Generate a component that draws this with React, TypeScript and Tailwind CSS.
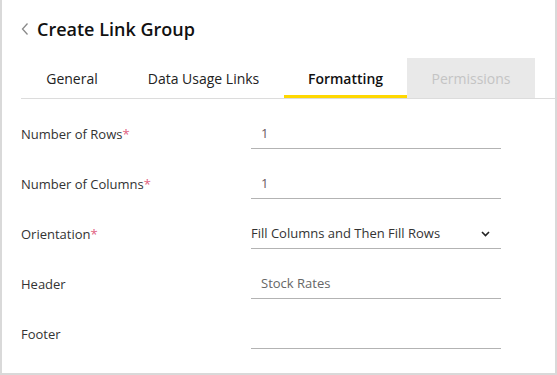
const tabs = [
  { label: 'General', state: 'normal', w: 'w-[102px]' },
  { label: 'Data Usage Links', state: 'normal', w: 'w-[161px]' },
  { label: 'Formatting', state: 'active', w: 'w-[123px]' },
  { label: 'Permissions', state: 'disabled', w: 'w-[128px]' },
]

function Field({ label, required, children }: { label: string; required?: boolean; children: React.ReactNode }) {
  return (
    <div className="flex h-[50px] items-end">
      <div className="flex h-[31px] w-[230px] items-center pt-[2px] text-[13px] text-[#333]">
        {label}
        {required && <span className="text-[#e0607e]">*</span>}
      </div>
      <div className="flex h-[31px] w-[250px] items-center border-b border-[#b3b3b3] pt-[2px] text-[13px]">{children}</div>
    </div>
  )
}

export default function App() {
  return (
    <div
      className="box-border h-[375px] w-[557px] border-x-2 border-b-2 border-[#d9d9d9] bg-white"
      style={{ fontFamily: '"Open Sans", "Liberation Sans", sans-serif' }}
    >
      <div className="flex h-[48px] items-center pl-[19px] pt-[10px]">
        <svg width="8" height="14" viewBox="0 0 8 14" className="mr-[8px]">
          <path d="M6.5 1.5 1.5 7l5 5.5" fill="none" stroke="#8a8a8a" strokeWidth="1.3" />
        </svg>
        <h1 className="text-[18px] font-semibold text-[#111]">Create Link Group</h1>
      </div>
      <div className="ml-[19px] mt-[10px] flex border-b border-[#dcdcdc]">
        {tabs.map((t) => (
          <div
            key={t.label}
            className={
              t.state === 'active'
                ? `flex h-[40px] ${t.w} items-center justify-center border-b-[3px] border-[#ffd800] pt-[3px] text-[14px] font-semibold text-[#111]`
                : t.state === 'disabled'
                  ? `flex h-[40px] ${t.w} items-center justify-center bg-[#e9e9e9] text-[14px] text-[#c4c4c4]`
                  : `flex h-[40px] ${t.w} items-center justify-center text-[14px] text-[#222]`
            }
          >
            {t.label}
          </div>
        ))}
      </div>
      <div className="pl-[19px]">
        <Field label="Number of Rows" required>
          <span className="pl-[10px] text-[#6b5a5f]">1</span>
        </Field>
        <Field label="Number of Columns" required>
          <span className="pl-[10px] text-[#6b5a5f]">1</span>
        </Field>
        <Field label="Orientation" required>
          <div className="flex w-full items-center justify-between pr-[11px] text-[#333]">
            <span>Fill Columns and Then Fill Rows</span>
            <svg width="9" height="6" viewBox="0 0 9 6">
              <path d="M1 1l3.5 3.5L8 1" fill="none" stroke="#222" strokeWidth="1.6" />
            </svg>
          </div>
        </Field>
        <Field label="Header">
          <span className="pl-[10px] text-[#666]">Stock Rates</span>
        </Field>
        <Field label="Footer">
          <span />
        </Field>
      </div>
    </div>
  )
}
